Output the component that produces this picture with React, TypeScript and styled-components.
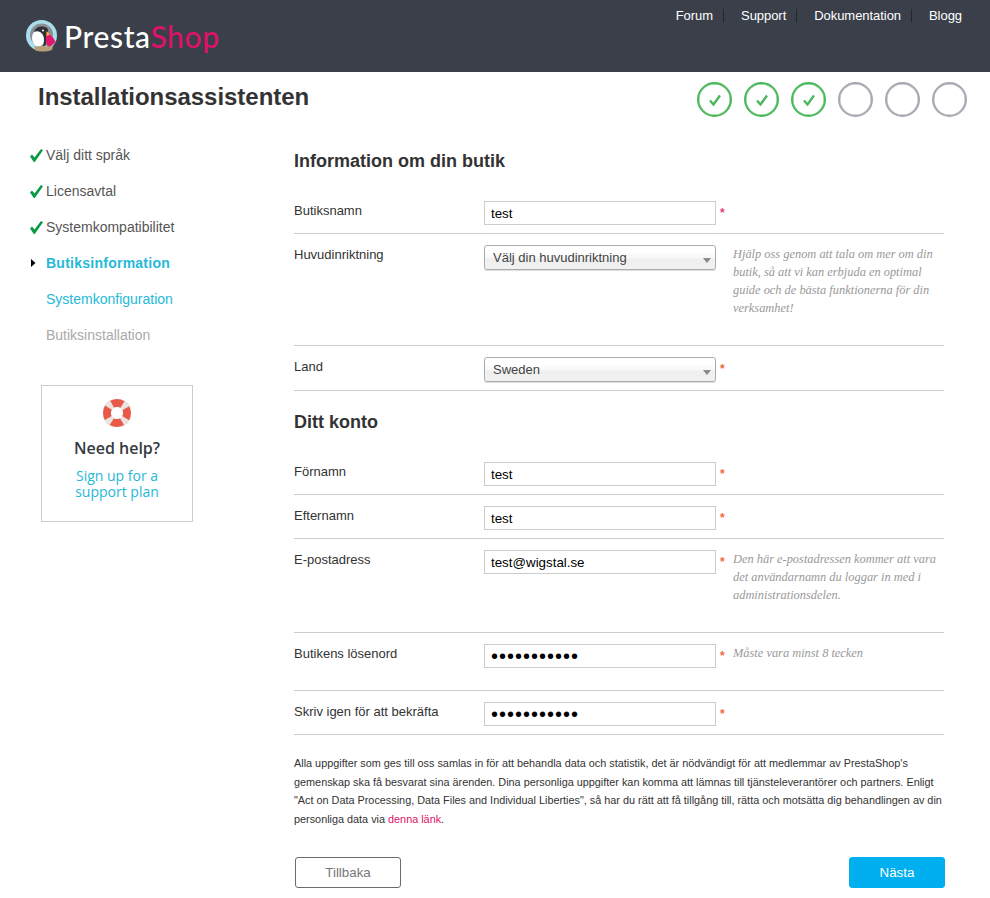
import { createGlobalStyle, styled } from "styled-components";

const GlobalStyle = createGlobalStyle`
    html, body {
        margin: 0;
        padding: 0;
        background: #fff;
        font-family: "Liberation Sans", Arial, sans-serif;
        color: #333;
    }
`;

const Header = styled.header`
    height: 72px;
    background: #3a3f4a;
    display: flex;
    justify-content: space-between;
    padding: 0 28px 0 25px;
`;

const Logo = styled.div`
    display: flex;
    align-items: center;
    gap: 6px;
    height: 32px;
    margin-top: 20px;
`;

const LogoText = styled.span`
    font-family: "Lato", sans-serif;
    font-size: 30px;
    font-weight: 500;
    line-height: 32px;
    color: #fff;
    letter-spacing: 0.6px;
    b {
        font-weight: 500;
        color: #df1168;
    }
`;

const TopNav = styled.nav`
    display: flex;
    padding-top: 9px;
`;

const TopLink = styled.a`
    font-size: 13px;
    line-height: 13px;
    height: 13px;
    letter-spacing: -0.05px;
    color: #fff;
    padding-right: 10px;
    margin-right: 17px;
    border-right: 1px solid #23262d;
    &:last-child {
        border: 0;
        padding: 0;
        margin: 0;
    }
`;

const TitleBar = styled.div`
    display: flex;
    justify-content: space-between;
    padding: 10px 23px 0 38px;
`;

const Title = styled.h1`
    margin: 0;
    font-size: 24px;
    line-height: 30px;
    font-weight: 700;
    letter-spacing: -0.04px;
    color: #333;
`;

const Steps = styled.div`
    display: flex;
    gap: 12px;
`;

const Step = styled.div<{ $done?: boolean }>`
    box-sizing: border-box;
    width: 35px;
    height: 35px;
    border-radius: 50%;
    border: 2px solid ${(p) => (p.$done ? "#4cb85c" : "#a6a9b2")};
    box-shadow: inset 0 0 0 0.4px ${(p) => (p.$done ? "#4cb85c" : "#a6a9b2")};
    display: flex;
    align-items: center;
    justify-content: center;
`;

const Content = styled.div`
    display: flex;
    margin-top: 20px;
`;

const Sidebar = styled.aside`
    width: 294px;
    flex: none;
`;

const StepList = styled.ul`
    list-style: none;
    margin: 0;
    padding: 0 0 0 30px;
`;

const StepItem = styled.li<{ $state: "done" | "current" | "next" | "later" }>`
    height: 36px;
    display: flex;
    align-items: center;
    font-size: 14px;
    font-weight: ${(p) => (p.$state === "current" ? 700 : 400)};
    letter-spacing: ${(p) => (p.$state === "current" ? "0.25px" : "0")};
    color: ${(p) =>
        p.$state === "done"
            ? "#555"
            : p.$state === "later"
              ? "#aaa"
              : "#25b9d7"};
`;

const StepMark = styled.span`
    width: 16px;
    flex: none;
    display: flex;
    align-items: center;
`;

const HelpBox = styled.div`
    box-sizing: border-box;
    width: 152px;
    height: 137px;
    margin: 32px 0 0 41px;
    border: 1px solid #ccc;
    font-family: "Open Sans", sans-serif;
    display: flex;
    flex-direction: column;
    align-items: center;
    padding-top: 12px;
`;

const HelpTitle = styled.div`
    margin-top: 9px;
    font-size: 16px;
    line-height: 22px;
    font-weight: 600;
    color: #363a41;
`;

const HelpLink = styled.a`
    margin-top: 9px;
    font-size: 14px;
    line-height: 16px;
    color: #25b9d7;
    text-align: center;
`;

const Main = styled.main`
    width: 650px;
`;

const SectionTitle = styled.h2<{ $first?: boolean }>`
    margin: ${(p) => (p.$first ? "13px" : "20px")} 0 29px;
    font-size: 18px;
    line-height: 22px;
    font-weight: 700;
    color: #333;
`;

const Row = styled.div`
    display: flex;
    border-bottom: 1px solid #ccc;
    padding-top: 11px;
    &.first {
        padding-top: 0;
    }
`;

const Label = styled.label`
    width: 190px;
    flex: none;
    font-size: 13px;
    line-height: 20px;
    color: #333;
`;

const Field = styled.div`
    position: relative;
    width: 232px;
    flex: none;
    padding-bottom: 8px;
`;

const TextInput = styled.input`
    display: block;
    box-sizing: border-box;
    width: 232px;
    height: 24px;
    padding: 0 6px;
    border: 1px solid #ccc;
    border-radius: 0;
    outline: 0;
    background: #fff;
    font-family: "Liberation Sans", Arial, sans-serif;
    font-size: 13.33px;
    color: #000;
    &[type="password"] {
        font-size: 20px;
        letter-spacing: 1px;
    }
`;

const Select = styled.select`
    display: block;
    box-sizing: border-box;
    width: 232px;
    height: 25px;
    padding: 0 8px;
    appearance: none;
    border: 1px solid #aaa;
    border-radius: 3px;
    outline: 0;
    background: linear-gradient(#fff 25%, #f8f8f8 50%, #eee 60%, #f2f2f2);
    box-shadow: 0 1px 1px #ddd;
    font-family: "Liberation Sans", Arial, sans-serif;
    font-size: 13px;
    color: #444;
`;

const SelectArrow = styled.span`
    position: absolute;
    top: 13px;
    right: 5px;
    width: 0;
    height: 0;
    border: 4.5px solid transparent;
    border-top: 5px solid #888;
    border-bottom: 0;
    pointer-events: none;
`;

const Required = styled.span<{ $pink?: boolean }>`
    width: 17px;
    flex: none;
    padding: 5px 0 0 4px;
    box-sizing: border-box;
    font-size: 12px;
    font-weight: 700;
    line-height: 14px;
    color: ${(p) => (p.$pink ? "#e6427c" : "#f4693e")};
`;

const Hint = styled.p`
    margin: 0;
    padding-bottom: 28px;
    width: 211px;
    flex: none;
    font-family: "Liberation Serif", serif;
    font-style: italic;
    font-size: 12.4px;
    line-height: 18px;
    color: #999;
`;

const Legal = styled.p`
    margin: 19px 0 28px;
    font-size: 10.85px;
    line-height: 18.67px;
    color: #333;
    a {
        color: #df1168;
    }
`;

const Buttons = styled.div`
    display: flex;
    justify-content: space-between;
    padding: 0 0 10px 1px;
    margin-right: -1px;
`;

const Button = styled.button<{ $primary?: boolean }>`
    box-sizing: border-box;
    height: 31px;
    width: ${(p) => (p.$primary ? "96px" : "106px")};
    border-radius: 3px;
    border: 1px solid ${(p) => (p.$primary ? "#00aff0" : "#6c6c6c")};
    background: ${(p) => (p.$primary ? "#00aff0" : "#fff")};
    color: ${(p) => (p.$primary ? "#fff" : "#777")};
    font-family: "Liberation Sans", Arial, sans-serif;
    font-size: 13.33px;
`;

const CircleCheck = () => (
    <svg width="12" height="12" viewBox="0 0 12 12">
        <path
            d="M1 6.500 L4.500 10.500 L11 1.500"
            fill="none"
            stroke="#4cb85c"
            strokeWidth="2.400"
        />
    </svg>
);

const SideCheck = () => (
    <svg width="13" height="13" viewBox="0 0 13 13">
        <path d="M0 7.500 L2 5.500 L4.500 8.500 L11 0 L13 1.300 L4.800 13 L3.800 13 Z" fill="#0a9a45" />
    </svg>
);

const SideArrow = () => (
    <svg width="6" height="8" viewBox="0 0 6 8">
        <path d="M1 0 L5.500 4 L1 8 Z" fill="#000" />
    </svg>
);

const Puffin = () => (
    <svg width="33" height="32" viewBox="0 0 33 32">
        <circle cx="16.500" cy="15.500" r="15.500" fill="#a9dfec" />
        <circle cx="16.500" cy="15" r="11.500" fill="#8b9096" />
        <ellipse cx="13.500" cy="18" rx="6.500" ry="8.500" fill="#fff" />
        <path
            d="M9 12 C10 7 17 5 22 8 C24 10 23 14 22 16 L21 24 C20 26 19 26 18 26 C20 20 19 14 15 12 C13 11 11 11 9 12 Z"
            fill="#2e3136"
        />
        <path d="M21.500 12 C25 14 29 18 30.500 22 C28 25 25 27 23 27 C21 24 20.500 18 21.500 12 Z" fill="#e3176d" />
        <path d="M21.500 11 L25 14.500 L21.500 16 Z" fill="#f4b63f" />
        <circle cx="18" cy="10.500" r="1" fill="#fff" />
        <path d="M9 26.500 C14 26 23 26 28 26.500 L27 30 C21 32 14 32 10 30 Z" fill="#b59f78" />
    </svg>
);

const Lifebuoy = () => (
    <svg width="30" height="30" viewBox="0 0 30 30">
        <rect x="1.500" y="1.500" width="27" height="27" rx="10" fill="#e9e4e0" />
        <circle
            cx="15"
            cy="15"
            r="10"
            fill="none"
            stroke="#e9594a"
            strokeWidth="8"
            strokeDasharray="10.700 5"
            strokeDashoffset="5.350"
        />
        <circle cx="15" cy="15" r="6" fill="#fff" />
    </svg>
);

const sideSteps = [
    { label: "Välj ditt språk", state: "done" },
    { label: "Licensavtal", state: "done" },
    { label: "Systemkompatibilitet", state: "done" },
    { label: "Butiksinformation", state: "current" },
    { label: "Systemkonfiguration", state: "next" },
    { label: "Butiksinstallation", state: "later" }
] as const;

const App = () => {
    return (
        <>
            <GlobalStyle />
            <Header>
                <Logo>
                    <Puffin />
                    <LogoText>
                        Presta<b>Shop</b>
                    </LogoText>
                </Logo>
                <TopNav>
                    <TopLink>Forum</TopLink>
                    <TopLink>Support</TopLink>
                    <TopLink>Dokumentation</TopLink>
                    <TopLink>Blogg</TopLink>
                </TopNav>
            </Header>
            <TitleBar>
                <Title>Installationsassistenten</Title>
                <Steps>
                    {[true, true, true, false, false, false].map((done, i) => (
                        <Step key={i} $done={done}>
                            {done && <CircleCheck />}
                        </Step>
                    ))}
                </Steps>
            </TitleBar>
            <Content>
                <Sidebar>
                    <StepList>
                        {sideSteps.map((step) => (
                            <StepItem key={step.label} $state={step.state}>
                                <StepMark>
                                    {step.state === "done" && <SideCheck />}
                                    {step.state === "current" && <SideArrow />}
                                </StepMark>
                                {step.label}
                            </StepItem>
                        ))}
                    </StepList>
                    <HelpBox>
                        <Lifebuoy />
                        <HelpTitle>Need help?</HelpTitle>
                        <HelpLink>
                            Sign up for a
                            <br />
                            support plan
                        </HelpLink>
                    </HelpBox>
                </Sidebar>
                <Main>
                    <SectionTitle $first>Information om din butik</SectionTitle>
                    <Row className="first">
                        <Label>Butiksnamn</Label>
                        <Field>
                            <TextInput defaultValue="test" />
                        </Field>
                        <Required $pink>*</Required>
                    </Row>
                    <Row>
                        <Label>Huvudinriktning</Label>
                        <Field>
                            <Select>
                                <option>Välj din huvudinriktning</option>
                            </Select>
                            <SelectArrow />
                        </Field>
                        <Required />
                        <Hint>
                            Hjälp oss genom att tala om mer om din butik, så att vi kan
                            erbjuda en optimal guide och de bästa funktionerna för din
                            verksamhet!
                        </Hint>
                    </Row>
                    <Row>
                        <Label>Land</Label>
                        <Field>
                            <Select>
                                <option>Sweden</option>
                            </Select>
                            <SelectArrow />
                        </Field>
                        <Required>*</Required>
                    </Row>
                    <SectionTitle>Ditt konto</SectionTitle>
                    <Row className="first">
                        <Label>Förnamn</Label>
                        <Field>
                            <TextInput defaultValue="test" />
                        </Field>
                        <Required>*</Required>
                    </Row>
                    <Row>
                        <Label>Efternamn</Label>
                        <Field>
                            <TextInput defaultValue="test" />
                        </Field>
                        <Required>*</Required>
                    </Row>
                    <Row>
                        <Label>E-postadress</Label>
                        <Field>
                            <TextInput defaultValue="test@wigstal.se" />
                        </Field>
                        <Required>*</Required>
                        <Hint>
                            Den här e-postadressen kommer att vara det användarnamn du
                            loggar in med i administrationsdelen.
                        </Hint>
                    </Row>
                    <Row>
                        <Label>Butikens lösenord</Label>
                        <Field>
                            <TextInput type="password" defaultValue="testtesttes" />
                        </Field>
                        <Required>*</Required>
                        <Hint>Måste vara minst 8 tecken</Hint>
                    </Row>
                    <Row>
                        <Label>Skriv igen för att bekräfta</Label>
                        <Field>
                            <TextInput type="password" defaultValue="testtesttes" />
                        </Field>
                        <Required>*</Required>
                    </Row>
                    <Legal>
                        Alla uppgifter som ges till oss samlas in för att behandla data och
                        statistik, det är nödvändigt för att medlemmar av PrestaShop's
                        gemenskap ska få besvarat sina ärenden. Dina personliga uppgifter kan
                        komma att lämnas till tjänsteleverantörer och partners. Enligt "Act on
                        Data Processing, Data Files and Individual Liberties", så har du rätt
                        att få tillgång till, rätta och motsätta dig behandlingen av din
                        personliga data via <a>denna länk</a>.
                    </Legal>
                    <Buttons>
                        <Button>Tillbaka</Button>
                        <Button $primary>Nästa</Button>
                    </Buttons>
                </Main>
            </Content>
        </>
    );
};

export default App;
